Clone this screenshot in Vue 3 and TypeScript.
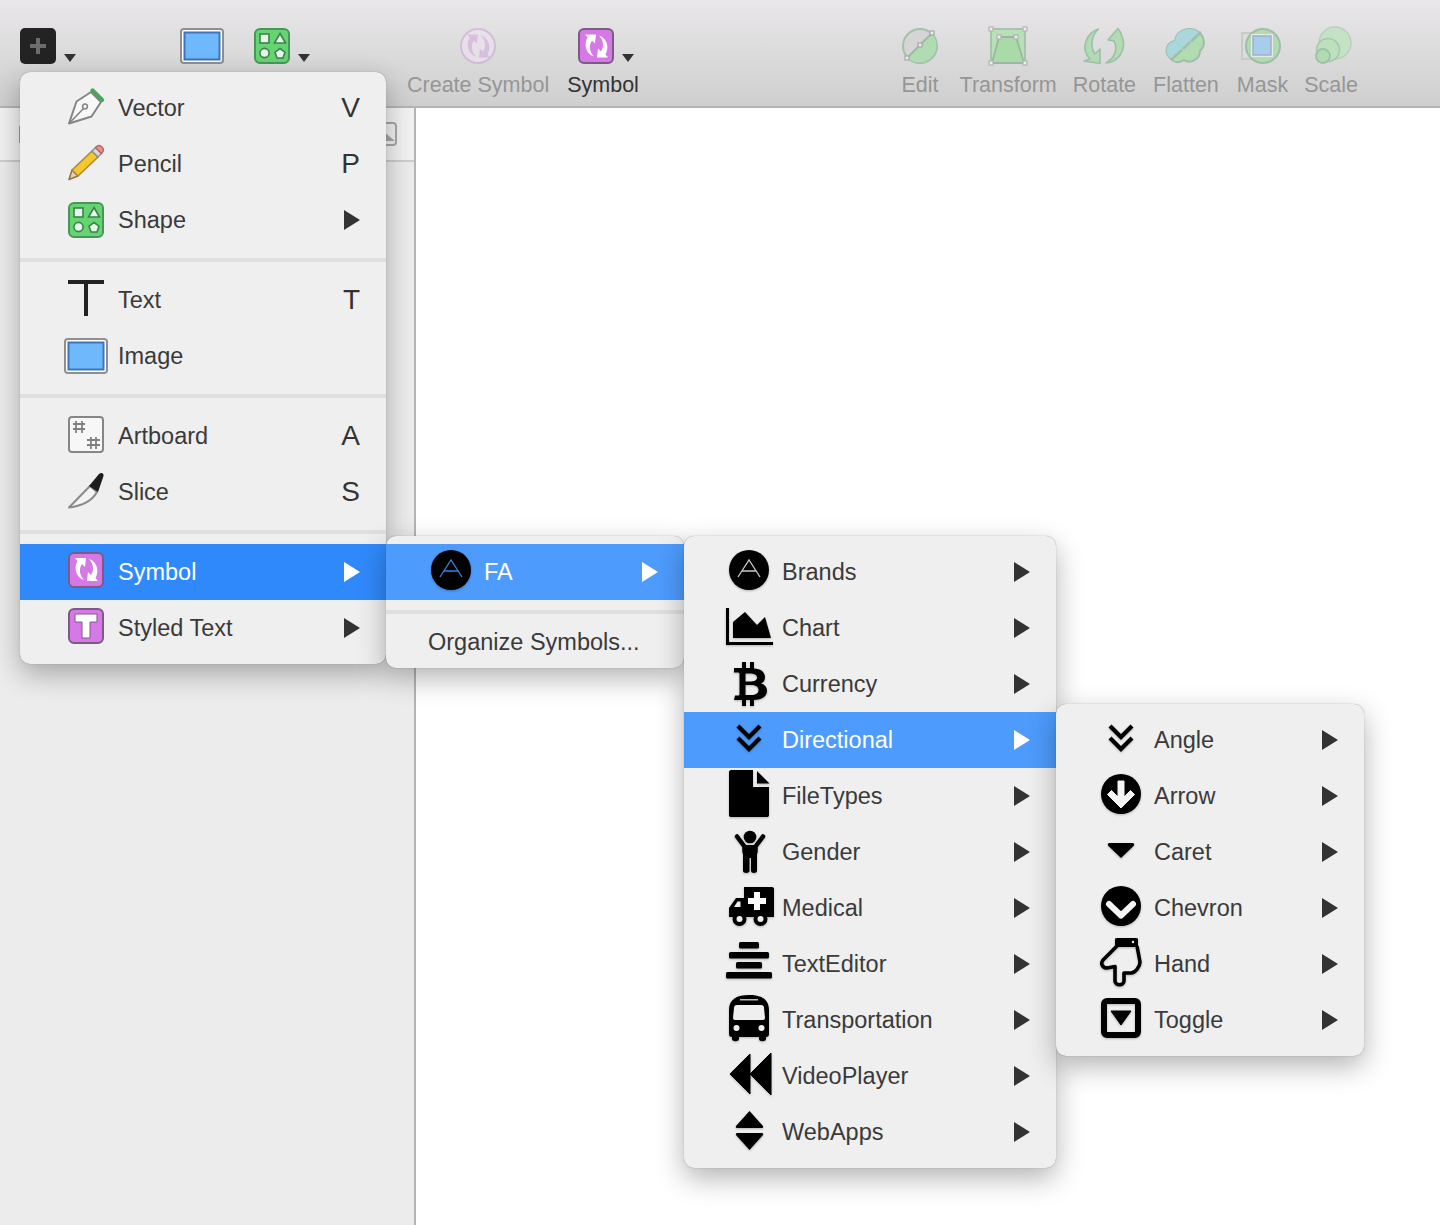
<template>
  <div class="app">
    <header class="toolbar">
      <div class="tool tool-insert">
        <svg class="ico" viewBox="0 0 48 48" v-html="icons.insert"></svg>
        <span class="caret"></span>
      </div>
      <div class="tool tool-image">
        <svg class="ico" viewBox="0 0 48 48" v-html="icons.image"></svg>
      </div>
      <div class="tool tool-shape">
        <svg class="ico" viewBox="0 0 48 48" v-html="icons.shape"></svg>
        <span class="caret"></span>
      </div>
      <div class="tool tool-create disabled">
        <svg class="ico" viewBox="0 0 48 48" v-html="icons.create"></svg>
        <span class="tool-label">Create Symbol</span>
      </div>
      <div class="tool tool-symbol">
        <svg class="ico" viewBox="0 0 48 48" v-html="icons.symbol"></svg>
        <span class="caret"></span>
        <span class="tool-label">Symbol</span>
      </div>
      <div class="tool-group">
        <div v-for="t in rightTools" :key="t.label" class="tool disabled" :class="t.cls">
          <svg class="ico" viewBox="0 0 48 48" v-html="icons[t.icon]"></svg>
          <span class="tool-label">{{ t.label }}</span>
        </div>
      </div>
    </header>

    <div class="body">
      <aside class="sidebar">
        <div class="sidebar-head">
          <span class="peek"></span>
          <svg class="collapse" viewBox="0 0 14 24">
            <rect x="-6" y="1" width="18" height="22" rx="3" fill="none" stroke="#a8a8a8" stroke-width="2" />
            <path d="M0 10 L11 19 H0 Z" fill="#a8a8a8" />
          </svg>
        </div>
      </aside>
      <main class="canvas"></main>
    </div>

    <div v-for="m in menus" :key="m.cls" class="menu" :class="m.cls">
      <template v-for="(row, i) in m.rows" :key="i">
        <div v-if="row.sep" class="sep"></div>
        <div v-else class="row" :class="{ active: row.active, plain: !row.icon }">
          <svg v-if="row.icon" class="ico row-ico" viewBox="0 0 48 48" v-html="icons[row.icon]"></svg>
          <span class="row-label">{{ row.label }}</span>
          <span v-if="row.key" class="shortcut">{{ row.key }}</span>
          <span v-if="row.sub" class="arrow"></span>
        </div>
      </template>
    </div>
  </div>
</template>

<script setup lang="ts">
interface Row {
  label?: string
  icon?: string
  key?: string
  sub?: boolean
  active?: boolean
  sep?: boolean
}

const arrows = (c: string) => `
  <path d="M13 10 L24 10 L23 19 L20 16 C17 20 17 27 22 32 C15 30 11 21 15.500 13 Z M36 33 L25 33 L26 24 L29 27 C32 23 32 16 27 11 C34 13 38 22 33.500 30 Z" fill="${c}" />`

const symbolBox = `
  <rect x="7" y="5" width="34" height="34" rx="5" fill="#d678e6" stroke="#7b5a86" stroke-width="2" />`

const faCircle = (c: string) => `
  <circle cx="24" cy="22" r="20" fill="#000" />
  <path d="M13 29 L24 12 L35 29 M17 23 H31" fill="none" stroke="${c}" stroke-width="1.3" />`

const shapeIcon = `
  <rect x="7" y="7" width="34" height="34" rx="5" fill="#66d470" stroke="#46985a" stroke-width="2" />
  <g fill="#e4f6e6" stroke="#3f7f52" stroke-width="1.6">
    <rect x="12" y="12" width="9" height="9" />
    <path d="M32 11.500 L37.500 21 H26.500 Z" />
    <circle cx="16.500" cy="31" r="4.600" />
    <path d="M32 26.500 L37 30.200 L35 36 H29 L27 30.200 Z" />
  </g>`

const imageIcon = `
  <rect x="3" y="7" width="42" height="34" rx="3" fill="#fff" stroke="#8f8f8f" stroke-width="2" />
  <rect x="6.500" y="10.500" width="35" height="27" fill="#6fb8fb" stroke="#3f74b8" stroke-width="2" />`

const icons: Record<string, string> = {
  insert: `
    <rect x="6" y="6" width="36" height="36" rx="5" fill="#232323" />
    <path d="M22 16 H26 V22 H32 V26 H26 V32 H22 V26 H16 V22 H22 Z" fill="#6d6d6d" />`,
  image: imageIcon,
  shape: shapeIcon,
  create: `
    <g opacity=".55">
      <circle cx="24" cy="24" r="17" fill="#f0e4f2" stroke="#c9a3d3" stroke-width="2" />
      <g transform="translate(0 2.500)">${arrows('#d2a7dd')}</g>
    </g>`,
  symbol: `${symbolBox.replace('y="5"', 'y="7"')}<g transform="translate(0 2.500)">${arrows('#fff')}</g>`,
  edit: `
    <circle cx="24" cy="24" r="17" fill="#d5d5d5" stroke="#a3c2ac" stroke-width="2" />
    <path d="M12 36 L36 12 A17 17 0 0 1 12 36 Z" fill="#b1dcb2" />
    <path d="M10 37 L37 10" stroke="#9cb9a4" stroke-width="2" />
    <g fill="#ececec" stroke="#a8a8a8" stroke-width="1.200">
      <rect x="9" y="34" width="4" height="4" /><rect x="22" y="21" width="4" height="4" /><rect x="34" y="9" width="4" height="4" />
    </g>`,
  transform: `
    <rect x="7" y="7" width="34" height="34" fill="#b8e0b8" stroke="#a9c4ae" stroke-width="2" />
    <path d="M15 15 H32 L40 41 H8 Z" fill="#a9dba9" stroke="#9cb5a4" stroke-width="1.800" />
    <g fill="#eee" stroke="#b4b4b4" stroke-width="1.200">
      <rect x="5" y="5" width="4" height="4" /><rect x="39" y="5" width="4" height="4" />
      <rect x="5" y="39" width="4" height="4" /><rect x="39" y="39" width="4" height="4" />
      <rect x="13" y="13" width="4" height="4" /><rect x="30" y="13" width="4" height="4" />
    </g>`,
  rotate: `
    <g fill="#b1dcb2" stroke="#9dbfa7" stroke-width="1.600" stroke-linejoin="round">
      <path d="M18.500 7 C6 11 0 27 10 37 L4 39 L20 41.500 L20 27 L15 32 C10 25 11 14 18.500 7 Z" />
      <path d="M26 41 C39 40 47 27 42 14 C41 11 40 9 38 6.500 L28 18 L34 19 C38 27 35 36 26 41 Z" />
    </g>`,
  flatten: `
    <path d="M8 36 C2 30 4 21 13 19 C14 9 25 5 33 8 C42 12 45 22 38 29 C38 38 28 42 22 38 C16 42 11 40 8 36 Z" fill="#b1dcb2" stroke="#9dbfa7" stroke-width="2" />
    <path d="M8 36 C2 30 4 21 13 19 C14 9 25 5 33 8 C35 9 37 10 38 12 Z" fill="#a8d8de" />
    <path d="M9 38 L39 10" stroke="#9dbfa7" stroke-width="2.400" />
    <circle cx="23" cy="22" r="6" fill="none" stroke="#b9cfc8" stroke-width="1.200" />`,
  mask: `
    <rect x="3" y="11" width="26" height="26" fill="#dcdcdc" stroke="#c9c9c9" stroke-width="2" />
    <circle cx="24" cy="24" r="17" fill="#b1dcb2" stroke="#9dbfa7" stroke-width="2" />
    <rect x="12" y="12" width="22" height="23" fill="#e8e8e8" />
    <rect x="14" y="14" width="18" height="19" fill="#a8cdec" stroke="#9fb2c6" stroke-width="1.500" />`,
  scale: `
    <circle cx="28" cy="21" r="16" fill="#c6e2c6" stroke="#b6d0ba" stroke-width="1.400" />
    <circle cx="21" cy="28" r="11.500" fill="#bde0bd" stroke="#a9c8b0" stroke-width="1.600" />
    <circle cx="16" cy="34" r="7" fill="#b1dcb2" stroke="#9dbfa7" stroke-width="1.800" />`,
  vector: `
    <path d="M7 39.500 L14.500 17.500 L29 8 L39 18 L29.500 32.500 Z" fill="#f8f8f8" stroke="#858585" stroke-width="2" stroke-linejoin="round" />
    <path d="M7 39.500 L21.500 24.500" stroke="#858585" stroke-width="1.600" />
    <circle cx="23" cy="22.500" r="2.400" fill="#f8f8f8" stroke="#858585" stroke-width="1.500" />
    <path d="M30.500 6.500 L40 16" stroke="#4ba65c" stroke-width="4.400" stroke-linecap="round" />`,
  pencil: `
    <path d="M7 39.500 L10 30 L16 36 Z" fill="#e2d3b4" stroke="#947548" stroke-width="1.600" stroke-linejoin="round" />
    <path d="M10 30 L30 11 L36 17 L16 36 Z" fill="#f4c72e" stroke="#a98a38" stroke-width="1.600" />
    <path d="M30 11 L33.500 7.500 L39.500 13.500 L36 17 Z" fill="#d8d8d8" stroke="#8e8e8e" stroke-width="1.400" />
    <path d="M33.500 7.500 C36 5 38 5 40 7 C42 9 42 11 39.500 13.500 Z" fill="#ef8f8f" stroke="#b76464" stroke-width="1.400" />`,
  text: `<path d="M6 4 H42 V8 H26 V40 H22 V8 H6 Z" fill="#222" />`,
  artboard: `
    <rect x="7" y="5" width="34" height="35" rx="3" fill="#f7f7f7" stroke="#868686" stroke-width="2" />
    <g stroke="#808080" stroke-width="1.800" fill="none">
      <path d="M11 12 H23 M11 17 H23 M14 9 V21 M20 9 V21" />
      <path d="M25 28 H38 M25 33 H38 M29 25 V37 M34 25 V37" />
    </g>`,
  slice: `
    <path d="M7 39.500 C19 38 30 33 35 24 L28 18 Z" fill="#f3f3f3" stroke="#8a8a8a" stroke-width="2" stroke-linejoin="round" />
    <path d="M27 18 L37 6 C39 4 42 5 41.500 8 L36 24 Z" fill="#1c1c1c" />`,
  symbolRow: symbolBox + arrows('#fff'),
  styled: `
    ${symbolBox}
    <path d="M13 10 H35 V18 H28 V34 H20 V18 H13 Z" fill="#fff" stroke="#7b5a86" stroke-width="1" />`,
  faActive: faCircle('#3d80d8'),
  brands: faCircle('#c9c9c9'),
  chart: `
    <path d="M1 4 H4 V38 H48 V41 H1 Z" fill="#000" />
    <path d="M8 34 V18 L20 8 L32 21 L40 13 L46 34 Z" fill="#000" />`,
  currency: `
    <path fill="#000" fill-rule="evenodd" d="M9 8 H17 V2 H21 V8 H25 V2 H29 V8.500 C36 9 40 12 40 17 C40 20.500 38.500 22.500 36 23.500 C40 24.500 42 27 42 31 C42 36.500 37 39.500 29 40 V46 H25 V40 H21 V46 H17 V40 H9 L10 35.500 H13 C14 35.500 14.500 35 14.500 34 V14 C14.500 13 14 12.500 13 12.500 H9 Z M20.500 13.500 V21.500 H25 C29 21.500 32 20.500 32 17.500 C32 14.500 29 13.500 25 13.500 Z M20.500 25 V35 H26 C31 35 33.500 33.500 33.500 30 C33.500 26.500 30.500 25 26 25 Z" />`,
  angle: `
    <path d="M13 10 L24 21 L35 10 M13 22 L24 33 L35 22" fill="none" stroke="#000" stroke-width="4.200" />`,
  file: `
    <path d="M6 -2 H28 V15 H44 V43 C44 44.500 43 45 42 45 H6 C5 45 4 44.500 4 43 V0 C4 -1 5 -2 6 -2 Z" fill="#000" />
    <path d="M32 -1 L44.500 11.500 H32 Z" fill="#000" />`,
  gender: `
    <circle cx="25" cy="9" r="6.300" fill="#000" />
    <path d="M12 8.500 L19.500 18.500 V24 H30.500 V18.500 L38 8.500" fill="none" stroke="#000" stroke-width="4.500" stroke-linecap="round" stroke-linejoin="round" />
    <path d="M18 17 H32 V43 C32 45.500 26 45.500 26 43 V30 H24.500 V43 C24.500 45.500 18 45.500 18 43 Z" fill="#000" />`,
  medical: `
    <path d="M19 3 H47 C48.500 3 49 4 49 5 V33 H4 V24 L11 14 H19 Z" fill="#000" />
    <path d="M9 23 L12.500 17.500 H15.500 V23 Z" fill="#efefef" />
    <path d="M29 8 H35 V14 H41 V20 H35 V26 H29 V20 H23 V14 H29 Z" fill="#fff" />
    <circle cx="14.500" cy="35" r="7" fill="#000" /><circle cx="35.500" cy="35" r="7" fill="#000" />
    <circle cx="14.500" cy="35" r="3" fill="#efefef" /><circle cx="35.500" cy="35" r="3" fill="#efefef" />`,
  align: `
    <g fill="#000">
      <rect x="14" y="2" width="20" height="6.500" rx="1.500" />
      <rect x="4" y="12" width="40" height="6.500" rx="1.500" />
      <rect x="11" y="22" width="26" height="6.500" rx="1.500" />
      <rect x="1" y="32" width="46" height="6.500" rx="1.500" />
    </g>`,
  bus: `
    <path d="M4 14 C4 3 12 -1 24 -1 C36 -1 44 3 44 14 V38 C44 40 43 41 41 41 V43 C41 46 34 46 34 43 V41 H14 V43 C14 46 7 46 7 43 V41 C5 41 4 40 4 38 Z" fill="#000" />
    <path d="M12 9 H36 C38 9 39 10 39 12 L40 22 C40 23 39 24 38 24 H10 C9 24 8 23 8 22 L9 12 C9 10 10 9 12 9 Z" fill="#efefef" />
    <rect x="15" y="3" width="18" height="1.500" fill="#bbb" />
    <circle cx="11.500" cy="32" r="3" fill="#efefef" /><circle cx="36.500" cy="32" r="3" fill="#efefef" />`,
  backward: `
    <path d="M5 22 L25 2 V42 Z M25 22 L46 1 V43 Z" fill="#000" stroke="#000" stroke-width="1" stroke-linejoin="round" />`,
  sort: `
    <path d="M24.500 3 L38 18 C38.500 19 38 20 37 20 H12 C11 20 10.500 19 11 18 Z M12 25 H37 C38 25 38.500 26 38 27 L24.500 42 L11 27 C10.500 26 11 25 12 25 Z" fill="#000" />`,
  arrowCircle: `
    <circle cx="24" cy="22" r="20" fill="#000" />
    <path d="M24 36 L10.500 22.500 L14.500 18.500 L21 25 V9 H27 V25 L33.500 18.500 L37.500 22.500 Z" fill="#f4f4f4" stroke="#f4f4f4" stroke-linejoin="round" />`,
  caret: `
    <path d="M13 15 H35 C37 15 38 16.500 36.500 18 L24 30 L11.500 18 C10 16.500 11 15 13 15 Z" fill="#000" />`,
  chevronCircle: `
    <circle cx="24" cy="22" r="20" fill="#000" />
    <path d="M12 21 L24 32.500 L36 21" transform="translate(0 -1)" fill="none" stroke="#f4f4f4" stroke-width="6" stroke-linecap="round" stroke-linejoin="round" />`,
  hand: `
    <path d="M20 6 L6 20 C3 24 6 28 10 28 L18 26.500 V41 C18 46 27 46 27 41 V33 H34 C38 33 43 27 43 22 L40 6" fill="none" stroke="#000" stroke-width="3.600" stroke-linejoin="round" />
    <path d="M18 0 C18 -2 19 -2 21 -2 H38 C40 -2 41 -2 41 0 V7 H18 Z" fill="#000" />
    <circle cx="36" cy="2" r="1.200" fill="#efefef" />`,
  toggle: `
    <rect x="7" y="5" width="34" height="34" rx="3" fill="none" stroke="#000" stroke-width="6" />
    <path d="M14 15 H34 L24 29 Z" fill="#000" stroke="#000" stroke-linejoin="round" />`,
}

const rightTools = [
  { label: 'Edit', icon: 'edit', cls: 'tool-edit' },
  { label: 'Transform', icon: 'transform', cls: 'tool-transform' },
  { label: 'Rotate', icon: 'rotate', cls: '' },
  { label: 'Flatten', icon: 'flatten', cls: 'tool-flatten' },
  { label: 'Mask', icon: 'mask', cls: 'tool-mask' },
  { label: 'Scale', icon: 'scale', cls: '' },
]

const menus: { cls: string; rows: Row[] }[] = [
  {
    cls: 'menu-main',
    rows: [
      { label: 'Vector', icon: 'vector', key: 'V' },
      { label: 'Pencil', icon: 'pencil', key: 'P' },
      { label: 'Shape', icon: 'shape', sub: true },
      { sep: true },
      { label: 'Text', icon: 'text', key: 'T' },
      { label: 'Image', icon: 'image' },
      { sep: true },
      { label: 'Artboard', icon: 'artboard', key: 'A' },
      { label: 'Slice', icon: 'slice', key: 'S' },
      { sep: true },
      { label: 'Symbol', icon: 'symbolRow', sub: true, active: true },
      { label: 'Styled Text', icon: 'styled', sub: true },
    ],
  },
  {
    cls: 'menu-fa',
    rows: [
      { label: 'FA', icon: 'faActive', sub: true, active: true },
      { sep: true },
      { label: 'Organize Symbols...' },
    ],
  },
  {
    cls: 'menu-cat',
    rows: [
      { label: 'Brands', icon: 'brands', sub: true },
      { label: 'Chart', icon: 'chart', sub: true },
      { label: 'Currency', icon: 'currency', sub: true },
      { label: 'Directional', icon: 'angle', sub: true, active: true },
      { label: 'FileTypes', icon: 'file', sub: true },
      { label: 'Gender', icon: 'gender', sub: true },
      { label: 'Medical', icon: 'medical', sub: true },
      { label: 'TextEditor', icon: 'align', sub: true },
      { label: 'Transportation', icon: 'bus', sub: true },
      { label: 'VideoPlayer', icon: 'backward', sub: true },
      { label: 'WebApps', icon: 'sort', sub: true },
    ],
  },
  {
    cls: 'menu-dir',
    rows: [
      { label: 'Angle', icon: 'angle', sub: true },
      { label: 'Arrow', icon: 'arrowCircle', sub: true },
      { label: 'Caret', icon: 'caret', sub: true },
      { label: 'Chevron', icon: 'chevronCircle', sub: true },
      { label: 'Hand', icon: 'hand', sub: true },
      { label: 'Toggle', icon: 'toggle', sub: true },
    ],
  },
]
</script>

<style>
html,
body {
  margin: 0;
  background: #fff;
}
</style>

<style scoped>
.app {
  position: relative;
  width: 1440px;
  height: 1225px;
  overflow: hidden;
  display: flex;
  flex-direction: column;
  font-family: "Liberation Sans", Arial, sans-serif;
  color: #3a3a3a;
}

.toolbar {
  flex: none;
  box-sizing: border-box;
  height: 108px;
  display: flex;
  align-items: flex-start;
  padding: 22px 82px 0 14px;
  background: linear-gradient(#e9e7e9, #cfcfcf);
  border-bottom: 2px solid #b4b4b4;
}

.tool {
  position: relative;
  display: flex;
  flex-direction: column;
  align-items: center;
}

.ico {
  display: block;
  flex: none;
  width: 48px;
  height: 48px;
  overflow: visible;
}

.tool .ico {
  margin: 0 -12px;
}

.tool-label {
  margin-top: 2px;
  font-size: 21.5px;
  line-height: 26px;
  white-space: nowrap;
  color: #333;
}

.disabled .tool-label {
  color: #969696;
}

.caret {
  position: absolute;
  top: 32px;
  left: 50px;
  border-top: 8px solid #333;
  border-left: 6px solid transparent;
  border-right: 6px solid transparent;
}

.tool-insert,
.tool-image,
.tool-shape {
  width: 48px;
}

.tool-image {
  margin-left: 116px;
}

.tool-shape {
  margin-left: 22px;
}

.tool-create {
  margin-left: 111px;
}

.tool-symbol {
  margin-left: 18px;
}

.tool-symbol .ico {
  margin-right: 3px;
}

.tool-symbol .caret {
  left: 55px;
}

.tool-group {
  margin-left: auto;
  display: flex;
  gap: 17px;
}

.tool-edit {
  margin-right: 4px;
}

.tool-transform,
.tool-mask {
  margin-right: -1px;
}

.tool-flatten {
  margin-right: 1px;
}

.body {
  flex: 1;
  display: flex;
  min-height: 0;
}

.sidebar {
  flex: none;
  width: 414px;
  background: #ececec;
  border-right: 2px solid #b4b4b4;
}

.sidebar-head {
  box-sizing: border-box;
  height: 54px;
  display: flex;
  justify-content: space-between;
  align-items: flex-start;
  padding: 14px 16px 0 19px;
  background: #f2f2f2;
  border-bottom: 2px solid #cdcdcd;
}

.peek {
  width: 1px;
  height: 17px;
  margin-top: 4px;
  background: #b8a078;
}

.collapse {
  width: 14px;
  height: 24px;
}

.canvas {
  flex: 1;
  background: #fff;
}

.menu {
  position: absolute;
  box-sizing: border-box;
  padding: 8px 0;
  background: #efefef;
  border-radius: 10px;
  box-shadow: 0 0 1px rgba(0, 0, 0, 0.45), 0 10px 28px rgba(0, 0, 0, 0.3);
}

.menu-main {
  left: 20px;
  top: 72px;
  width: 366px;
}

.menu-fa {
  left: 386px;
  top: 536px;
  width: 298px;
}

.menu-cat {
  left: 684px;
  top: 536px;
  width: 372px;
}

.menu-dir {
  left: 1056px;
  top: 704px;
  width: 308px;
}

.row {
  display: flex;
  align-items: center;
  height: 56px;
  padding: 0 26px 0 41px;
  font-size: 23.5px;
  color: #3a3a3a;
}

.menu-main .row,
.row.plain {
  padding-left: 42px;
}

.menu-main .row-ico {
  margin-right: 8px;
}

.row.plain {
  height: 36px;
}

.row.active {
  background: #4d9bfd;
  color: #fff;
}

.menu-main .row.active {
  background: #3089fb;
}

.row-ico {
  margin-right: 9px;
}

.menu-fa .row-ico,
.menu-cat .row-ico,
.menu-dir .row-ico {
  filter: drop-shadow(0 1px 1px rgba(0, 0, 0, 0.25));
}

.row-label {
  flex: 1;
  margin-top: 1px;
  white-space: nowrap;
}

.shortcut {
  font-size: 28px;
  line-height: 32px;
  color: #333;
}

.arrow {
  border-left: 16px solid #333;
  border-top: 10px solid transparent;
  border-bottom: 10px solid transparent;
}

.active .arrow {
  border-left-color: #fff;
}

.sep {
  height: 4px;
  margin: 10px 0;
  background: #dfdfdf;
}
</style>
